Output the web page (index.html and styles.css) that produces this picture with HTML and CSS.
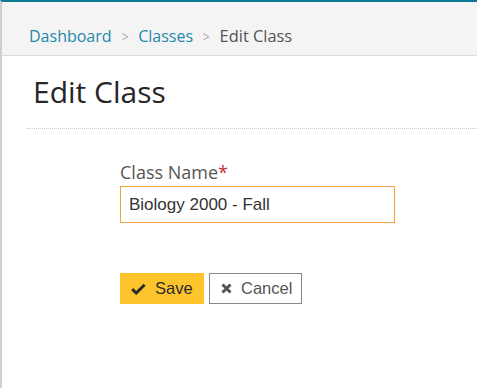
FILE: index.html
```html
<!DOCTYPE html>
<html>
<head>
<meta charset="utf-8">
<link rel="stylesheet" href="styles.css">
</head>
<body>
<div class="page">
  <nav class="crumbs">
    <a class="crumb-link">Dashboard</a>
    <span class="sep">&gt;</span>
    <a class="crumb-link">Classes</a>
    <span class="sep">&gt;</span>
    <span class="crumb-current">Edit Class</span>
  </nav>
  <main class="content">
    <h1 class="title">Edit Class</h1>
    <form class="form">
      <label class="label">Class Name<span class="req">*</span></label>
      <input class="input" type="text" value="Biology 2000 - Fall">
      <div class="actions">
        <button type="button" class="btn btn-save">
          <svg class="ico" width="15" height="12" viewBox="0 0 15 12"><path d="M1.2 6.2 L5.2 10 L13.6 1.8" fill="none" stroke="#2b2b2b" stroke-width="3" stroke-linejoin="miter"/></svg>
          Save
        </button>
        <button type="button" class="btn btn-cancel">
          <svg class="ico" width="11" height="11" viewBox="0 0 11 11"><path d="M1.5 1.5 L9.5 9.5 M9.5 1.5 L1.5 9.5" fill="none" stroke="#555" stroke-width="3"/></svg>
          Cancel
        </button>
      </div>
    </form>
  </main>
</div>
</body>
</html>
```
FILE: styles.css
```css
html, body {
  margin: 0;
  padding: 0;
  background: #fff;
}
.page {
  border-top: 2px solid #0b7a96;
  border-left: 2px solid #d0d0d0;
  box-sizing: border-box;
  height: 388px;
}
.crumbs {
  background: #f4f4f4;
  border-bottom: 1px solid #dcdcdc;
  height: 39px;
  padding: 14px 0 0 27px;
  display: flex;
  align-items: center;
  font-family: "Open Sans", sans-serif;
  font-size: 16px;
}
.crumb-link {
  color: #1e88ab;
  line-height: 22px;
}
.crumb-current {
  color: #555;
  font-size: 16.4px;
}
.sep {
  color: #aaa;
  font-size: 15px;
  margin: 0 9px;
  transform: scaleX(0.8);
}
.content {
  padding-left: 25px;
}
.title {
  font-family: "Open Sans", sans-serif;
  font-weight: 400;
  font-size: 30px;
  color: #262626;
  margin: 0;
  padding: 16px 0 0 6px;
  line-height: 40px;
  height: 56px;
  border-bottom: 1px dotted #ccc;
}
.form {
  padding-left: 93px;
  padding-top: 31px;
  display: flex;
  flex-direction: column;
  align-items: flex-start;
}
.label {
  font-family: "Open Sans", sans-serif;
  font-size: 18px;
  color: #555;
  line-height: 24px;
}
.req {
  color: #c9302c;
}
.input {
  margin-top: 2px;
  width: 275px;
  height: 37px;
  box-sizing: border-box;
  border: 1px solid #f5a042;
  padding: 0 8px;
  font-family: "Liberation Sans", Arial, sans-serif;
  font-size: 17px;
  color: #333;
  outline: none;
}
.actions {
  margin-top: 50px;
  display: flex;
  gap: 5px;
}
.btn {
  height: 31px;
  box-sizing: border-box;
  display: flex;
  align-items: center;
  gap: 9px;
  font-family: "Liberation Sans", Arial, sans-serif;
  font-size: 16.5px;
  border-radius: 0;
  cursor: pointer;
}
.btn-save {
  background: #fec42b;
  border: none;
  color: #2b2b2b;
  width: 84px;
  padding: 0 0 0 11px;
}
.btn-cancel {
  background: #fff;
  border: 1px solid #888;
  color: #555;
  width: 93px;
  padding: 0 0 0 11px;
}
.ico {
  display: block;
}
```
